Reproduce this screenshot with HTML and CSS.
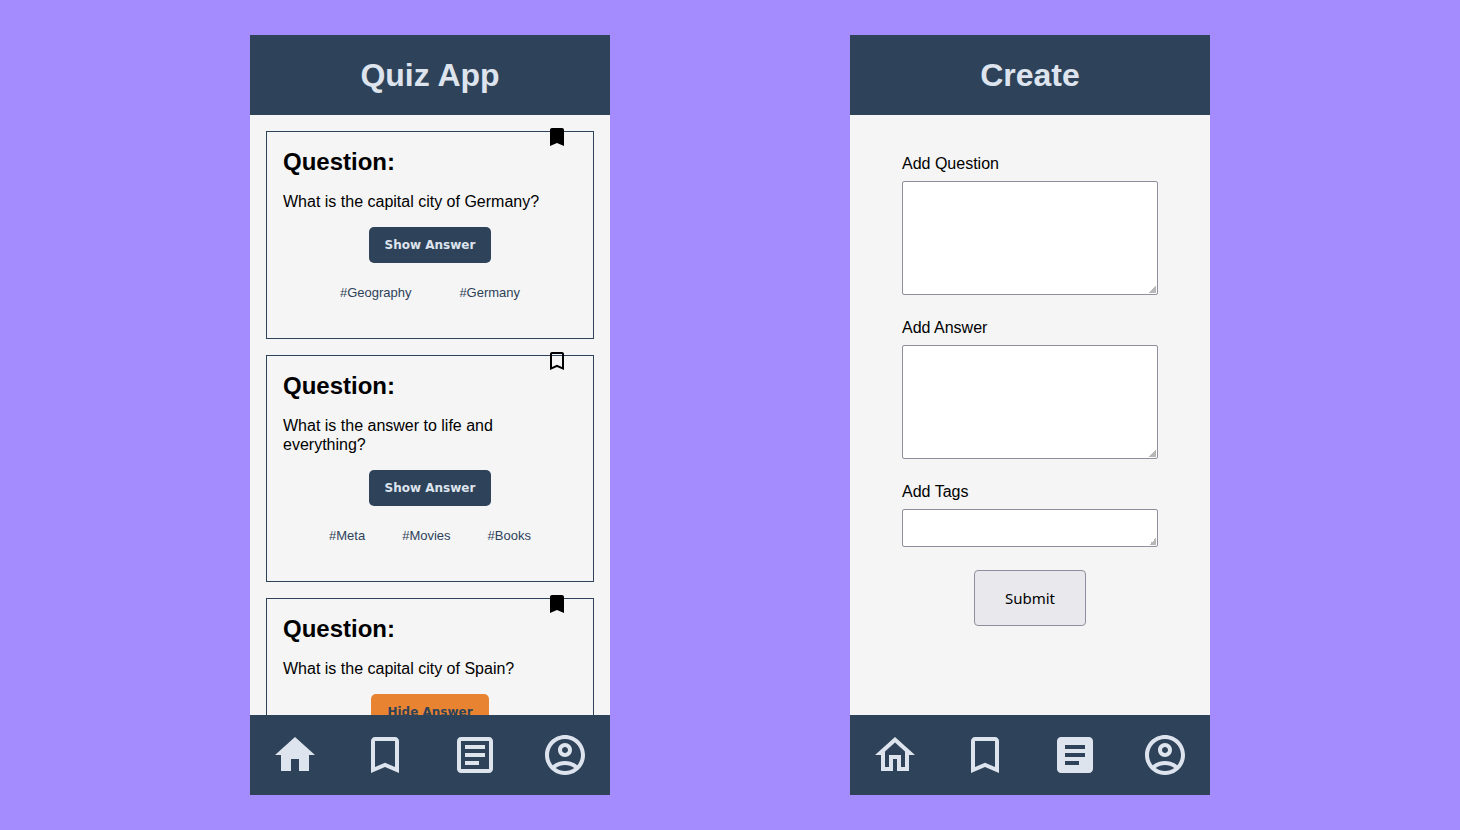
FILE: index.html
```html
<!DOCTYPE html>
<html lang="en">
<head>
<meta charset="utf-8">
<meta name="viewport" content="width=device-width, initial-scale=1">
<title>Quiz App</title>
<link rel="stylesheet" href="styles.css">
</head>
<body>
<svg class="sprite" aria-hidden="true">
  <symbol id="home" viewBox="0 0 24 24"><path d="M10 20v-6h4v6h5v-8h3L12 3 2 12h3v8z"/></symbol>
  <symbol id="home-outline" viewBox="0 0 24 24"><path d="M12 5.69l5 4.5V18h-2v-6H9v6H7v-7.81l5-4.5M12 3L2 12h3v8h6v-6h2v6h6v-8h3L12 3z"/></symbol>
  <symbol id="bookmark" viewBox="0 0 24 24"><path d="M17 3H7c-1.100 0-2 .9-2 2v16l7-3 7 3V5c0-1.100-.9-2-2-2z"/></symbol>
  <symbol id="bookmark-outline" viewBox="0 0 24 24"><path d="M17 3H7c-1.100 0-2 .9-2 2v16l7-3 7 3V5c0-1.100-.9-2-2-2zm0 15l-5-2.180L7 18V5h10v13z"/></symbol>
  <symbol id="article" viewBox="0 0 24 24"><path d="M19 3H5c-1.100 0-2 .9-2 2v14c0 1.100.9 2 2 2h14c1.100 0 2-.9 2-2V5c0-1.100-.9-2-2-2zm-5 14H7v-2h7v2zm3-4H7v-2h10v2zm0-4H7V7h10v2z"/></symbol>
  <symbol id="article-outline" viewBox="0 0 24 24"><path d="M19 5v14H5V5h14m0-2H5c-1.100 0-2 .9-2 2v14c0 1.100.9 2 2 2h14c1.100 0 2-.9 2-2V5c0-1.100-.9-2-2-2zM14 17H7v-2h7v2zm3-4H7v-2h10v2zm0-4H7V7h10v2z"/></symbol>
  <symbol id="account" viewBox="0 0 24 24"><path d="M12 2C6.480 2 2 6.480 2 12s4.480 10 10 10 10-4.480 10-10S17.520 2 12 2zM7.350 18.500C8.660 17.560 10.260 17 12 17s3.340.560 4.650 1.500C15.340 19.440 13.740 20 12 20s-3.340-.560-4.650-1.500zm10.790-1.380C16.450 15.800 14.320 15 12 15s-4.450.800-6.140 2.120C4.700 15.730 4 13.950 4 12c0-4.420 3.580-8 8-8s8 3.580 8 8c0 1.950-.7 3.730-1.860 5.120z"/><path d="M12 6c-1.930 0-3.500 1.570-3.500 3.500S10.070 13 12 13s3.500-1.570 3.500-3.500S13.930 6 12 6zm0 5c-.83 0-1.500-.67-1.500-1.500S11.170 8 12 8s1.500.67 1.500 1.500S12.830 11 12 11z"/></symbol>
</svg>

<section class="screen">
  <header class="header"><h1 class="title">Quiz App</h1></header>
  <main class="cards">
    <article class="card">
      <button class="card-bookmark" type="button" aria-label="Remove bookmark"><svg class="icon"><use href="#bookmark"/></svg></button>
      <h2 class="card-title">Question:</h2>
      <p class="card-text">What is the capital city of Germany?</p>
      <button class="answer-button" type="button">Show Answer</button>
      <ul class="tags"><li>#Geography</li><li>#Germany</li></ul>
    </article>
    <article class="card">
      <button class="card-bookmark" type="button" aria-label="Add bookmark"><svg class="icon"><use href="#bookmark-outline"/></svg></button>
      <h2 class="card-title">Question:</h2>
      <p class="card-text">What is the answer to life and everything?</p>
      <button class="answer-button" type="button">Show Answer</button>
      <ul class="tags"><li>#Meta</li><li>#Movies</li><li>#Books</li></ul>
    </article>
    <article class="card">
      <button class="card-bookmark" type="button" aria-label="Remove bookmark"><svg class="icon"><use href="#bookmark"/></svg></button>
      <h2 class="card-title">Question:</h2>
      <p class="card-text">What is the capital city of Spain?</p>
      <button class="answer-button answer-button-open" type="button">Hide Answer</button>
    </article>
  </main>
  <nav class="nav" aria-label="Quiz App">
    <a class="nav-link" href="#" aria-label="Home"><svg class="nav-icon"><use href="#home"/></svg></a>
    <a class="nav-link" href="#" aria-label="Bookmarks"><svg class="nav-icon"><use href="#bookmark-outline"/></svg></a>
    <a class="nav-link" href="#" aria-label="Create"><svg class="nav-icon"><use href="#article-outline"/></svg></a>
    <a class="nav-link" href="#" aria-label="Profile"><svg class="nav-icon"><use href="#account"/></svg></a>
  </nav>
</section>

<section class="screen">
  <header class="header"><h1 class="title">Create</h1></header>
  <main class="create">
    <form class="form">
      <div class="field">
        <label for="question">Add Question</label>
        <textarea class="input input-large" id="question"></textarea>
      </div>
      <div class="field">
        <label for="answer">Add Answer</label>
        <textarea class="input input-large" id="answer"></textarea>
      </div>
      <div class="field">
        <label for="tags">Add Tags</label>
        <textarea class="input input-small" id="tags"></textarea>
      </div>
      <button class="submit" type="submit">Submit</button>
    </form>
  </main>
  <nav class="nav" aria-label="Create">
    <a class="nav-link" href="#" aria-label="Home"><svg class="nav-icon"><use href="#home-outline"/></svg></a>
    <a class="nav-link" href="#" aria-label="Bookmarks"><svg class="nav-icon"><use href="#bookmark-outline"/></svg></a>
    <a class="nav-link" href="#" aria-label="Create"><svg class="nav-icon"><use href="#article"/></svg></a>
    <a class="nav-link" href="#" aria-label="Profile"><svg class="nav-icon"><use href="#account"/></svg></a>
  </nav>
</section>
</body>
</html>
```
FILE: styles.css
```css
:root {
  --navy: #2e4259;
  --pale: #dde4ee;
  --paper: #f5f5f5;
  --orange: #e78331;
}

* {
  box-sizing: border-box;
  margin: 0;
  padding: 0;
}

body {
  display: flex;
  justify-content: center;
  gap: 240px;
  height: 100vh;
  padding: 35px;
  background: #a48cff;
  color: #000;
  font: 16px/19px "Liberation Sans", Arial, sans-serif;
}

.sprite {
  position: absolute;
  width: 0;
  height: 0;
}

.screen {
  display: grid;
  grid-template-rows: 80px minmax(0, 1fr) 80px;
  flex: 0 1 360px;
  background: var(--paper);
}

.header {
  display: flex;
  align-items: center;
  justify-content: center;
  background: var(--navy);
  color: var(--pale);
}

.title {
  font-size: 32px;
  line-height: 38px;
}

.cards {
  display: flex;
  flex-direction: column;
  gap: 16px;
  padding: 16px;
  overflow: hidden;
}

.card {
  position: relative;
  display: flex;
  flex-direction: column;
  flex-shrink: 0;
  padding: 16px;
  padding-bottom: 36px;
  border: 1px solid var(--navy);
}

.card-bookmark {
  position: absolute;
  top: -7px;
  right: 24px;
  border: 0;
  background: none;
  color: #000;
}

.icon {
  display: block;
  width: 24px;
  height: 24px;
  fill: currentColor;
}

.card-title {
  margin-bottom: 16px;
  font-size: 24px;
  line-height: 28px;
}

.card-text {
  margin-bottom: 16px;
}

.answer-button {
  align-self: center;
  padding: 8px 16px;
  border: 0;
  border-radius: 5px;
  background: var(--navy);
  color: var(--pale);
  font: bold 12px/20px Verdana, "DejaVu Sans", sans-serif;
}

.answer-button-open {
  background: var(--orange);
  color: var(--navy);
}

.tags {
  display: flex;
  justify-content: space-evenly;
  margin-top: 20px;
  padding: 0 9px;
  color: var(--navy);
  font-size: 13px;
  list-style: none;
}

.create {
  padding: 39px 52px;
}

.form {
  display: flex;
  flex-direction: column;
  gap: 23px;
}

.field {
  display: flex;
  flex-direction: column;
  gap: 8px;
}

.input {
  border: 1px solid #8f8f9d;
  border-radius: 2px;
  background: #fff;
  font: inherit;
  resize: both;
}

.input::-webkit-resizer {
  background: linear-gradient(135deg, transparent 75%, #b8b8b8 75%) left top / 14px 14px no-repeat;
}

.input-large {
  height: 114px;
}

.input-small {
  height: 38px;
}

.submit {
  align-self: center;
  padding: 16px 30px;
  border: 1px solid #8f8f9d;
  border-radius: 4px;
  background: #e9e9ed;
  color: #000;
  font: 15px/22px "Noto Sans", sans-serif;
}

.nav {
  display: grid;
  grid-template-columns: repeat(4, 1fr);
  background: var(--navy);
}

.nav-link {
  display: grid;
  place-items: center;
  color: var(--pale);
}

.nav-icon {
  width: 48px;
  height: 48px;
  fill: currentColor;
}
```
